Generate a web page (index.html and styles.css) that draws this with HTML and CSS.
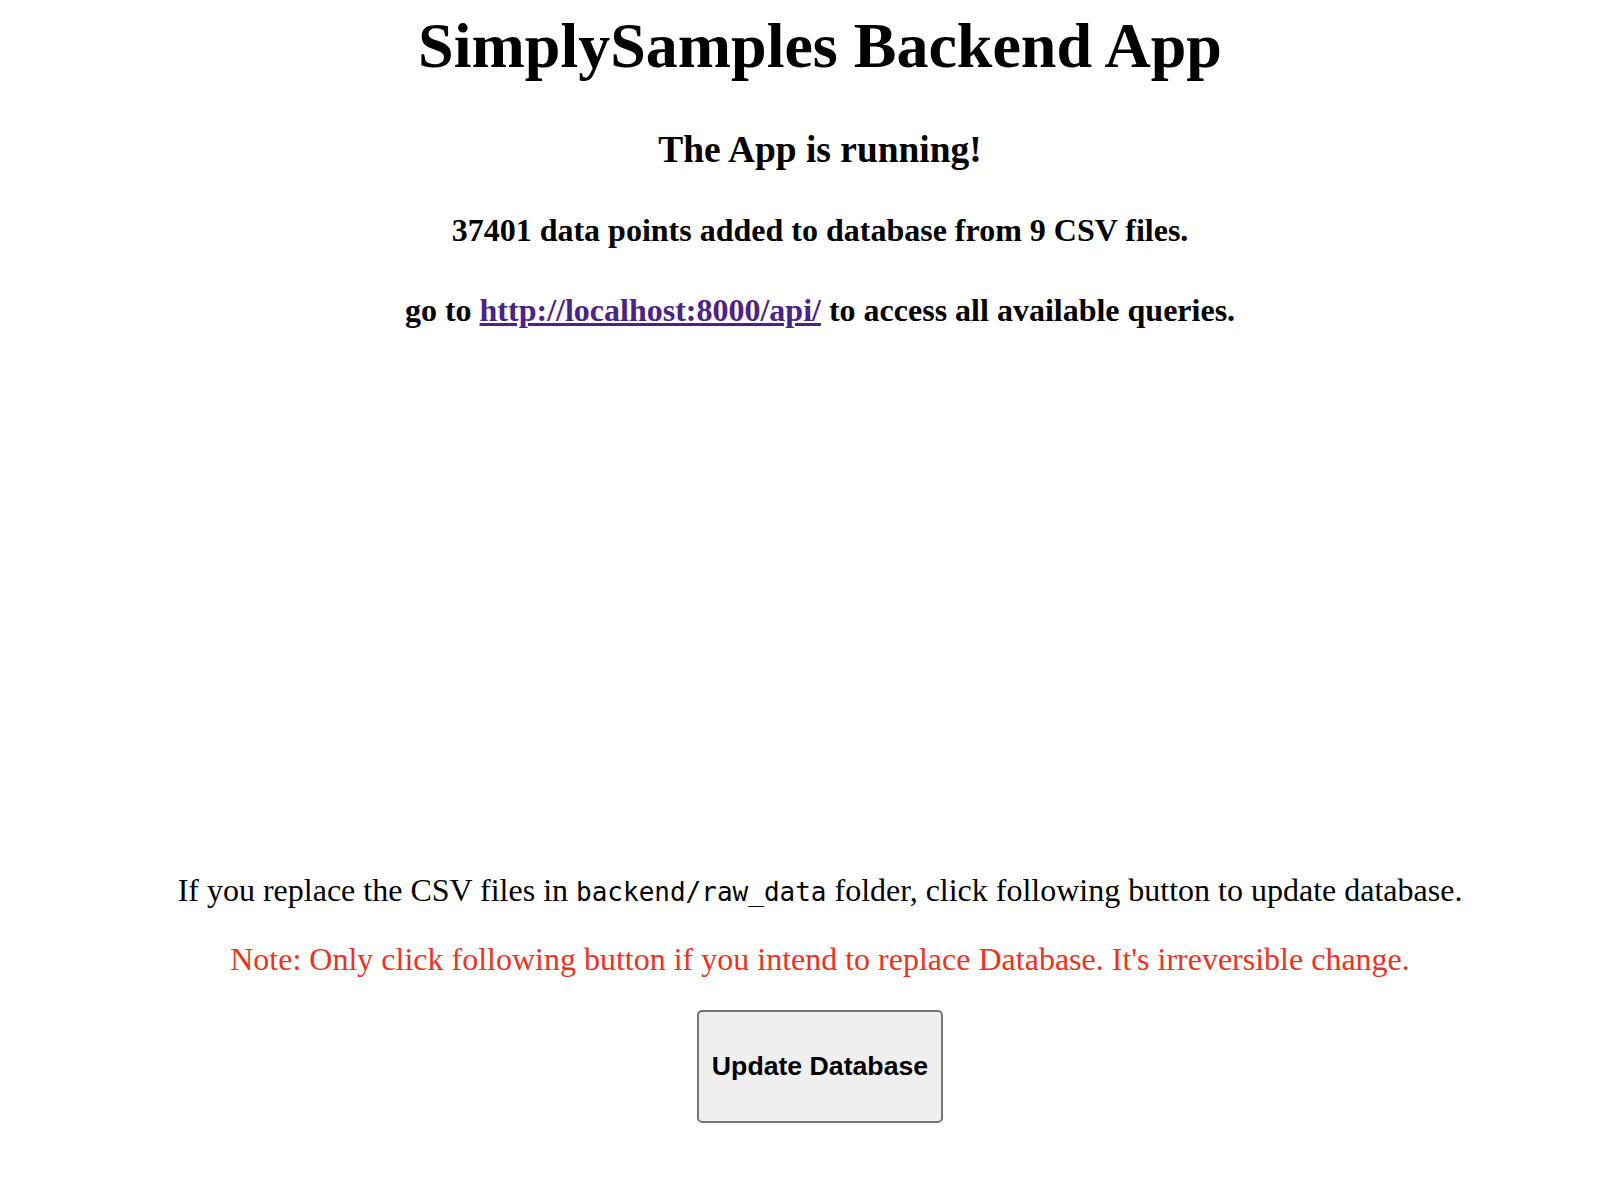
FILE: index.html
```html
<!DOCTYPE html>
<html lang="en">
<head>
<meta charset="utf-8">
<title>SimplySamples Backend App</title>
<link rel="stylesheet" href="styles.css">
</head>
<body>
<main class="page">
  <h1 class="title">SimplySamples Backend App</h1>
  <h3 class="status">The App is running!</h3>
  <h4 class="info">37401 data points added to database from 9 CSV files.</h4>
  <h4 class="info">go to <a class="link" href="http://localhost:8000/api/">http://localhost:8000/api/</a> to access all available queries.</h4>
  <div class="spacer"></div>
  <p class="text">If you replace the CSV files in <code class="code">backend/raw_data</code> folder, click following button to update database.</p>
  <p class="text note">Note: Only click following button if you intend to replace Database. It's irreversible change.</p>
  <div class="actions">
    <button class="btn" type="button">Update Database</button>
  </div>
</main>
</body>
</html>
```
FILE: styles.css
```css
html, body {
  background: #ffffff;
}
body {
  margin: 9px 8px 8px 32px;
  font-family: "Liberation Serif", "Times New Roman", serif;
  font-size: 32px;
  color: #000000;
}
.page {
  text-align: center;
}
.title {
  font-size: 64px;
  font-weight: bold;
  margin: 0 0 45px;
}
.status {
  font-size: 37.44px;
  font-weight: bold;
  margin: 37.44px 0 35px;
}
.info {
  font-size: 32px;
  font-weight: bold;
  margin: 42.56px 0;
}
.status + .info {
  margin-top: 41px;
}
.link {
  color: #4b2386;
  text-decoration: underline;
}
.spacer {
  height: 469px;
}
.text {
  margin: 32px 0;
}
.note {
  color: #ea3323;
}
.code {
  font-family: "DejaVu Sans Mono", "Liberation Mono", monospace;
  font-size: 26px;
}
.actions {
  display: flex;
  justify-content: center;
}
.btn {
  font-family: "Liberation Sans", Arial, sans-serif;
  font-size: 26.67px;
  font-weight: bold;
  color: #000000;
  background: #efefef;
  border: 2px solid #767676;
  border-radius: 5px;
  padding: 39px 13px;
  line-height: 31px;
}
```
